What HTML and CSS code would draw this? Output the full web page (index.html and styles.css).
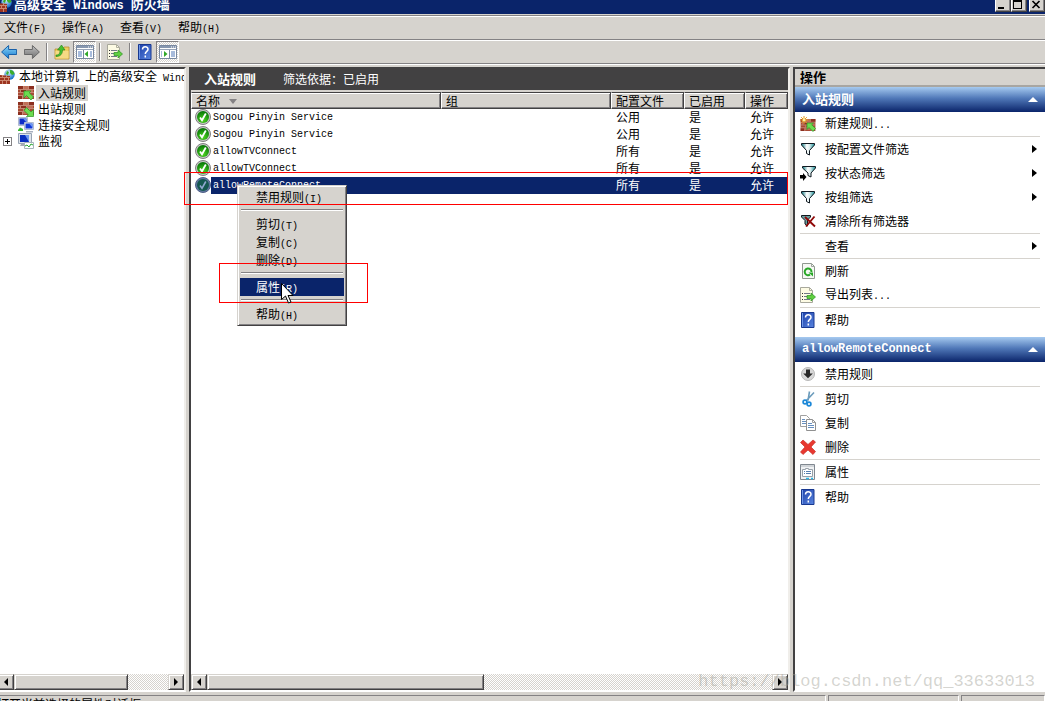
FILE: index.html
```html
<!DOCTYPE html>
<html lang="zh-CN">
<head>
<meta charset="utf-8">
<title>高级安全 Windows 防火墙</title>
<link rel="stylesheet" href="styles.css">
</head>
<body>
<svg class="sprite" aria-hidden="true">
  <defs>
    <linearGradient id="g-blue" x1="0" y1="0" x2="0" y2="1"><stop offset="0" stop-color="#8fd8f8"/><stop offset="1" stop-color="#1478d0"/></linearGradient>
    <linearGradient id="g-grey" x1="0" y1="0" x2="0" y2="1"><stop offset="0" stop-color="#c0c0c0"/><stop offset="1" stop-color="#707070"/></linearGradient>
    <linearGradient id="g-help" x1="0" y1="0" x2="1" y2="1"><stop offset="0" stop-color="#1c3fa8"/><stop offset="1" stop-color="#5a86e0"/></linearGradient>
    <linearGradient id="g-funnel" x1="0" y1="0" x2="1" y2="0"><stop offset="0" stop-color="#0a7880"/><stop offset=".4" stop-color="#ffffff"/><stop offset=".6" stop-color="#e0f0f0"/><stop offset="1" stop-color="#169098"/></linearGradient>
    <radialGradient id="g-ok" cx=".5" cy=".75" r=".7"><stop offset="0" stop-color="#4fd820"/><stop offset="1" stop-color="#087808"/></radialGradient>
    <radialGradient id="g-globe" cx=".4" cy=".3" r=".7"><stop offset="0" stop-color="#d8f4ff"/><stop offset="1" stop-color="#1470c8"/></radialGradient>
  </defs>
  <symbol id="bricks" viewBox="0 0 16 13">
    <rect width="16" height="13" fill="#a84a34"/>
    <path d="M0 0h5v3H0zM11 0h5v3h-5zM3 4h5v2H3zM0 10h4v3H0z" fill="#8c2f20"/>
    <path d="M6 0h4v3H6zM9 4h6v2H9zM5 10h6v2H5z" fill="#c07058"/>
    <path d="M0 3.500h16M0 6.500h16M0 9.500h16M5.500 0v3M10.500 0v3M2.500 4v2M8.500 4v2M5.500 7v2M11.500 7v2M4.500 10v3M11.500 10v3" stroke="#d0a490" fill="none" stroke-width=".7"/>
  </symbol>
  <symbol id="i-firewall" viewBox="0 0 16 16">
    <circle cx="10.500" cy="5.500" r="5.200" fill="url(#g-globe)"/>
    <path d="M11 1c3 0 4 2 4.500 4L13 6l-2-2zM8 2l2 1-1 3-2-1z" fill="#3cae2c"/>
    <path d="M0 6l11 1v8H0z" fill="#9c3420"/>
    <path d="M0 8.500h11M0 11.500h11M3.500 6v2M7.500 6v2M5.500 9v2M9.500 9v2M3.500 12v3M7.500 12v3" stroke="#d89c84" fill="none" stroke-width=".8"/>
  </symbol>
  <symbol id="i-in" viewBox="0 0 16 16">
    <use href="#bricks" y="1" width="16" height="13"/>
    <path d="M6 6h7l-1.800 1.800L15.500 12 13 15l-4.500-4.500L6 13z" fill="#6cdc50" stroke="#2c9424" stroke-width=".7"/>
  </symbol>
  <symbol id="i-out" viewBox="0 0 16 16">
    <use href="#bricks" y="1" width="16" height="13"/>
    <path d="M15.500 15.500h-7l1.800-1.800L6 9.500 8.500 6.500 13 11l2.500-2.500z" fill="#6cdc50" stroke="#2c9424" stroke-width=".7"/>
  </symbol>
  <symbol id="i-new" viewBox="0 0 16 16">
    <use href="#bricks" y="3" width="16" height="12"/>
    <path d="M7 7h6.500l-1.800 1.800 3.800 3.700-2.500 3-4-4L7 13.500z" fill="#6cdc50" stroke="#2c9424" stroke-width=".7"/>
    <path d="M4 0v8M0 4h8M1.200 1.200l5.600 5.600M6.800 1.200L1.200 6.800" stroke="#e89818"/>
    <circle cx="4" cy="4" r="1.600" fill="#fff2a0"/>
  </symbol>
  <symbol id="i-conn" viewBox="0 0 16 16">
    <path d="M.500.500h9v8h-9z" fill="#e0e4ec" stroke="#b0bcd0"/><path d="M1.500 1.500h7v6h-7z" fill="#0c2cc8"/><path d="M5 1.500h3.500v4z" fill="#6c98f0"/>
    <path d="M6.500 5.500h9v7h-9z" fill="#e8ecf4" stroke="#b0bcd0"/><path d="M7.500 6.500h7v5h-7z" fill="#1038d8"/><path d="M11 6.500h3.500v4z" fill="#6c98f0"/>
    <path d="M0 13l2-2.500L5 12v2H0z" fill="#38b830"/><path d="M8 14h7v1.500H8z" fill="#a8b0c0"/>
  </symbol>
  <symbol id="i-monitor" viewBox="0 0 16 16">
    <path d="M.500.500h13v10H.500z" fill="#dfe4ea" stroke="#98a4b4"/><path d="M2 2h9v7H2z" fill="#0a30c0"/><path d="M7 2h4v7z" fill="#6c98f0"/>
    <path d="M3 11h6v2H2z" fill="#a8acb4"/><path d="M6.500 9.500h9v6h-9z" fill="#fff" stroke="#a8b4bc"/>
    <path d="M7 13l2-1 2 2 2-3 2 1" stroke="#28a830" fill="none"/>
  </symbol>
  <symbol id="i-ok" viewBox="0 0 16 16">
    <circle cx="8" cy="8" r="7.500" fill="#c8c8c8" stroke="#808080"/><circle cx="8" cy="8" r="6" fill="url(#g-ok)"/>
    <path d="M5 8.500L7 11.300l3.800-6.800" stroke="#fff" stroke-width="1.800" fill="none"/>
  </symbol>
  <symbol id="i-oksel" viewBox="0 0 16 16">
    <circle cx="8" cy="8" r="7.500" fill="#6078a0" stroke="#506088"/><circle cx="8" cy="8" r="6" fill="#145850"/>
    <path d="M5 8.500L7 11.300l3.800-6.800" stroke="#90a8d0" stroke-width="1.600" fill="none"/>
  </symbol>
  <symbol id="i-back" viewBox="0 0 16 16"><path d="M.600 8l7-6.500V5.500h8v5h-8v4z" fill="url(#g-blue)" stroke="#1860a8"/></symbol>
  <symbol id="i-fwd" viewBox="0 0 16 16"><path d="M15.400 8l-7-6.500V5.500h-8v5h8v4z" fill="url(#g-grey)" stroke="#686868"/></symbol>
  <symbol id="i-up" viewBox="0 0 16 16">
    <path d="M1 5h8l1-2h5v12H1z" fill="#f0cc60" stroke="#b89030" stroke-width=".8"/><path d="M1.500 7h13v7.500h-13z" fill="#f6da84"/>
    <path d="M2 11c3.500 0 4-2 4-5H3.500L7.500 1l3.500 5H8.500c0 4-2 6.500-6.500 6.500z" fill="#48c030" stroke="#208018" stroke-width=".6"/>
  </symbol>
  <symbol id="i-tree" viewBox="0 0 18 16">
    <path d="M.500 1.500h17v13H.500z" fill="#fff" stroke="#7888a0"/><path d="M1 2h16v2H1z" fill="#8898b0"/><path d="M1 5.500h16" stroke="#98a4b8"/>
    <path d="M12 3h1M14 3h1M16 3h1" stroke="#fff"/><path d="M7.500 6v8" stroke="#7888a0"/><path d="M2 8h4M2 10h4M2 12h4M14 8h2M14 10h2M14 12h2" stroke="#5078b8"/><path d="M12 7v6L8.500 10z" fill="#30a828"/>
  </symbol>
  <symbol id="i-pane" viewBox="0 0 18 16">
    <path d="M.500 1.500h17v13H.500z" fill="#fff" stroke="#7888a0"/><path d="M1 2h16v2H1z" fill="#8898b0"/><path d="M1 5.500h16" stroke="#98a4b8"/>
    <path d="M12 3h1M14 3h1M16 3h1" stroke="#fff"/><path d="M10.500 6v8" stroke="#7888a0"/><path d="M12 8h4M12 10h4M12 12h4M2 8h1M2 10h1M2 12h1" stroke="#5078b8"/><path d="M5 7v6l3.500-3z" fill="#30a828"/>
  </symbol>
  <symbol id="i-export" viewBox="0 0 16 16">
    <path d="M.500.500h9l3 3v12H.500z" fill="#fdfbe4" stroke="#a8a89c"/><path d="M9.500.500v3h3" fill="none" stroke="#b0b0a0"/>
    <path d="M2 6.500h1M2 9.500h1M2 12.500h1" stroke="#303030"/><path d="M4 6.500h6M4 9.500h4M4 12.500h6" stroke="#707888"/>
    <path d="M7 8.500h4V6l4.500 4L11 14v-2.500H7z" fill="#60d040" stroke="#289020" stroke-width=".7"/>
  </symbol>
  <symbol id="i-help" viewBox="0 0 14 16">
    <path d="M.500.500h12.500v15H.500z" fill="url(#g-help)" stroke="#183890"/><path d="M1.500 1v14" stroke="#7098e8"/>
    <path d="M4.500 5.500C4.500 2 10 2 10 5.200c0 2.300-2.700 2-2.700 4.800M7.300 11.500v2" stroke="#fff" stroke-width="1.500" fill="none"/>
  </symbol>
  <symbol id="i-funnel" viewBox="0 0 16 16"><path d="M1.500 2.500h13v1.500L9.500 9.500v4.500l-3-1.500v-3L1.500 4z" fill="url(#g-funnel)" stroke="#101820"/></symbol>
  <symbol id="i-funnelgo" viewBox="0 0 16 16"><path d="M2.500 1.500h13V3L11 8v4l-3-1.500V8L2.500 3z" fill="url(#g-funnel)" stroke="#101820"/><path d="M0 10h3V8l3.500 4L3 16v-2.500H0z" fill="#000"/></symbol>
  <symbol id="i-funnelx" viewBox="0 0 16 16"><path d="M1.500 2.500h9v1.500L7.500 7v6L5 11V7.500L1.500 4z" fill="#6aa0a0" stroke="#101820"/><path d="M5 4l10 9.500M14.500 3.500L6 13.500" stroke="#900808" stroke-width="1.900"/></symbol>
  <symbol id="i-refresh" viewBox="0 0 16 16">
    <path d="M2.500.500h9l3 3v12h-12z" fill="#f6f8f4" stroke="#909890"/><path d="M11.500.500v3h3" fill="none" stroke="#a0a8a0"/>
    <path d="M11.500 9a3.400 3.400 0 1 0-1.500 2.700" stroke="#28a828" stroke-width="2" fill="none"/><path d="M8.500 9.500l4.500 0v4z" fill="#28a828"/>
  </symbol>
  <symbol id="i-disable" viewBox="0 0 16 16"><circle cx="8" cy="8" r="6.500" fill="#d8d8d8" stroke="#b8b8b8"/><path d="M6 3.500h4V7.500h2.800L8 12.300 3.200 7.500H6z" fill="#282828"/></symbol>
  <symbol id="i-cut" viewBox="0 0 16 16"><path d="M9.500.500L8 9.500M14 1.500L6 10" stroke="#6c9cbc" stroke-width="1.600"/><circle cx="5" cy="11" r="1.900" fill="none" stroke="#1c88d8" stroke-width="1.700"/><circle cx="9" cy="13" r="1.900" fill="none" stroke="#1c88d8" stroke-width="1.700"/></symbol>
  <symbol id="i-copy" viewBox="0 0 16 16">
    <path d="M.500.500h6l3 3v8h-9z" fill="#fff" stroke="#a0a0a0"/><path d="M2 4.500h3M2 6.500h4M2 8.500h4" stroke="#6890c0"/>
    <path d="M6.500 4.500h6l3 3v8h-9z" fill="#fff" stroke="#909090"/><path d="M12.500 4.500v3h3" stroke="#a0a0a0" fill="none"/><path d="M8 8.500h4M8 10.500h6M8 12.500h6" stroke="#6890c0"/>
  </symbol>
  <symbol id="i-delete" viewBox="0 0 16 16"><path d="M3 1l5 4.500L13 1l2.500 2-4.500 5 4.500 4.500L13 15.500 8 11l-5 4.500L.500 13 5 8 .500 3.500z" fill="#e83830" stroke="#c83028" stroke-width=".7"/></symbol>
  <symbol id="i-props" viewBox="0 0 16 16">
    <path d="M.500.500h14v15H.500z" fill="#f0f2f4" stroke="#808890"/><path d="M1 1h13v2H1z" fill="#d0d4d8"/>
    <path d="M2.500 5.500h3v-1h3v1h4v7h-10z" fill="#fff" stroke="#98a0a8"/><path d="M4 7.500h1M4 9.500h1M6 7.500h5M6 9.500h5" stroke="#5880b0"/><path d="M6 14.500h3M11 14.500h2" stroke="#28b8e8" stroke-width="1.500"/>
  </symbol>
</svg>

<div class="window">
  <header class="titlebar">
    <svg class="icon"><use href="#i-firewall"/></svg>
    <h1 class="title">高级安全<span class="en"> Windows </span>防火墙</h1>
    <div class="controls">
      <button class="control" aria-label="最小化"><svg viewBox="0 0 12 12"><path d="M2 8h6v2H2z"/></svg></button>
      <button class="control" aria-label="最大化"><svg viewBox="0 0 12 12"><path d="M1 1h9v9H1zM2 3v6h7V3z" fill-rule="evenodd"/></svg></button>
      <button class="control control-close" aria-label="关闭"><svg viewBox="0 0 12 12"><path d="M2.500 2l7 7M9.500 2l-7 7" stroke="#000" stroke-width="1.700"/></svg></button>
    </div>
  </header>

  <nav class="menubar">
    <button>文件<span class="en">(F)</span></button>
    <button>操作<span class="en">(A)</span></button>
    <button>查看<span class="en">(V)</span></button>
    <button>帮助<span class="en">(H)</span></button>
  </nav>

  <div class="toolbar">
    <button class="tool" aria-label="后退"><svg class="icon"><use href="#i-back"/></svg></button>
    <button class="tool" aria-label="前进"><svg class="icon"><use href="#i-fwd"/></svg></button>
    <span class="divider"></span>
    <button class="tool" aria-label="上一级"><svg class="icon"><use href="#i-up"/></svg></button>
    <button class="tool pressed" aria-label="显示控制台树"><svg class="icon wide"><use href="#i-tree"/></svg></button>
    <span class="divider"></span>
    <button class="tool" aria-label="导出列表"><svg class="icon"><use href="#i-export"/></svg></button>
    <span class="divider"></span>
    <button class="tool" aria-label="帮助"><svg class="icon"><use href="#i-help"/></svg></button>
    <button class="tool pressed" aria-label="显示操作窗格"><svg class="icon wide"><use href="#i-pane"/></svg></button>
  </div>

  <main class="panes">
    <section class="pane tree-pane">
      <ul class="tree">
        <li class="root"><svg class="icon"><use href="#i-firewall"/></svg><span class="label">本地计算机<span class="en"> </span>上的高级安全<span class="en"> Windows </span>防火墙</span></li>
        <li><svg class="icon"><use href="#i-in"/></svg><span class="label current">入站规则</span></li>
        <li><svg class="icon"><use href="#i-out"/></svg><span class="label">出站规则</span></li>
        <li><svg class="icon"><use href="#i-conn"/></svg><span class="label">连接安全规则</span></li>
        <li class="expandable"><button class="expander" aria-label="展开"></button><svg class="icon"><use href="#i-monitor"/></svg><span class="label">监视</span></li>
      </ul>
      <div class="scrollbar">
        <button class="arrow" aria-label="向左滚动"><svg viewBox="0 0 8 8"><path d="M6 0v8L2 4z"/></svg></button>
        <div class="track"><div class="thumb" style="width:74%"></div></div>
        <button class="arrow" aria-label="向右滚动"><svg viewBox="0 0 8 8"><path d="M2 0v8l4-4z"/></svg></button>
      </div>
    </section>

    <section class="pane list-pane">
      <div class="banner"><h2>入站规则</h2><span>筛选依据：已启用</span></div>
      <div class="list">
        <table class="rules">
          <colgroup><col class="c-name"><col class="c-group"><col class="c-profile"><col class="c-enabled"><col></colgroup>
          <thead><tr><th>名称<svg class="sort" viewBox="0 0 8 5"><path d="M0 0h8L4 5z"/></svg></th><th>组</th><th>配置文件</th><th>已启用</th><th>操作</th></tr></thead>
          <tbody>
            <tr><td><div class="name"><svg class="icon"><use href="#i-ok"/></svg><span class="en">Sogou Pinyin Service</span></div></td><td></td><td>公用</td><td>是</td><td>允许</td></tr>
            <tr><td><div class="name"><svg class="icon"><use href="#i-ok"/></svg><span class="en">Sogou Pinyin Service</span></div></td><td></td><td>公用</td><td>是</td><td>允许</td></tr>
            <tr><td><div class="name"><svg class="icon"><use href="#i-ok"/></svg><span class="en">allowTVConnect</span></div></td><td></td><td>所有</td><td>是</td><td>允许</td></tr>
            <tr><td><div class="name"><svg class="icon"><use href="#i-ok"/></svg><span class="en">allowTVConnect</span></div></td><td></td><td>所有</td><td>是</td><td>允许</td></tr>
            <tr class="selected"><td><div class="name"><svg class="icon"><use href="#i-oksel"/></svg><span class="en">allowRemoteConnect</span></div></td><td></td><td>所有</td><td>是</td><td>允许</td></tr>
          </tbody>
        </table>
      </div>
      <div class="scrollbar">
        <button class="arrow" aria-label="向左滚动"><svg viewBox="0 0 8 8"><path d="M6 0v8L2 4z"/></svg></button>
        <div class="track"><div class="thumb" style="width:49%"></div></div>
        <button class="arrow" aria-label="向右滚动"><svg viewBox="0 0 8 8"><path d="M2 0v8l4-4z"/></svg></button>
      </div>
    </section>

    <aside class="pane actions-pane">
      <h2 class="actions-title">操作</h2>
      <section class="group">
        <h3>入站规则<svg class="collapse" viewBox="0 0 10 5"><path d="M0 5h10L5 0z"/></svg></h3>
        <ul>
          <li class="ruled"><button><svg class="icon"><use href="#i-new"/></svg><span>新建规则<span class="en">...</span></span></button></li>
          <li><button class="more"><svg class="icon"><use href="#i-funnel"/></svg><span>按配置文件筛选</span></button></li>
          <li><button class="more"><svg class="icon"><use href="#i-funnelgo"/></svg><span>按状态筛选</span></button></li>
          <li><button class="more"><svg class="icon"><use href="#i-funnel"/></svg><span>按组筛选</span></button></li>
          <li class="ruled"><button><svg class="icon"><use href="#i-funnelx"/></svg><span>清除所有筛选器</span></button></li>
          <li class="ruled"><button class="more"><svg class="icon"></svg><span>查看</span></button></li>
          <li><button><svg class="icon"><use href="#i-refresh"/></svg><span>刷新</span></button></li>
          <li class="ruled"><button><svg class="icon"><use href="#i-export"/></svg><span>导出列表<span class="en">...</span></span></button></li>
          <li><button><svg class="icon"><use href="#i-help"/></svg><span>帮助</span></button></li>
        </ul>
      </section>
      <section class="group">
        <h3><span class="en">allowRemoteConnect</span><svg class="collapse" viewBox="0 0 10 5"><path d="M0 5h10L5 0z"/></svg></h3>
        <ul>
          <li class="ruled"><button><svg class="icon"><use href="#i-disable"/></svg><span>禁用规则</span></button></li>
          <li><button><svg class="icon"><use href="#i-cut"/></svg><span>剪切</span></button></li>
          <li><button><svg class="icon"><use href="#i-copy"/></svg><span>复制</span></button></li>
          <li class="ruled"><button><svg class="icon"><use href="#i-delete"/></svg><span>删除</span></button></li>
          <li class="ruled"><button><svg class="icon"><use href="#i-props"/></svg><span>属性</span></button></li>
          <li><button><svg class="icon"><use href="#i-help"/></svg><span>帮助</span></button></li>
        </ul>
      </section>
    </aside>
  </main>

  <footer class="statusbar">
    <span class="status-text">打开当前选择的属性对话框</span><span class="status-box"></span><span class="status-box last"></span>
  </footer>

  <div class="context-menu" role="menu">
    <button role="menuitem">禁用规则<span class="en">(I)</span></button>
    <hr>
    <button role="menuitem">剪切<span class="en">(T)</span></button>
    <button role="menuitem">复制<span class="en">(C)</span></button>
    <button role="menuitem">删除<span class="en">(D)</span></button>
    <hr>
    <button role="menuitem" class="active">属性<span class="en">(R)</span></button>
    <hr>
    <button role="menuitem">帮助<span class="en">(H)</span></button>
  </div>

  <div class="mark mark-row"></div>
  <div class="mark mark-item"></div>
  <svg class="cursor" viewBox="0 0 13 21"><path d="M.500.500v16l4-3.500 3 7 2.500-1-3-6.500h5z" fill="#fff" stroke="#000"/></svg>
  <div class="watermark">https://blog.csdn.net/qq_33633013</div>
</div>
</body>
</html>
```

FILE: styles.css
```css
:root {
  --face: #d6d3ce;
  --navy: #0a246a;
  --shade: #848284;
  --dark: #424142;
}

* { box-sizing: border-box; }

body {
  margin: 0;
  overflow: hidden;
  background: var(--face);
  color: #000;
  font: 12px/16px "Noto Sans CJK SC", sans-serif;
}

h1, h2, h3, ul { margin: 0; padding: 0; font-size: 13px; list-style: none; }

button {
  margin: 0;
  padding: 0;
  border: 0;
  background: none;
  color: inherit;
  font: inherit;
}

.sprite { position: absolute; width: 0; height: 0; }
.icon { flex: none; display: block; width: 16px; height: 16px; }
.icon.wide { width: 18px; }

.en {
  font-family: "Liberation Mono", monospace;
  font-size: 10px;
  white-space: pre;
}
h1 .en, h3 .en { font-size: 12px; }

/* The frame's border lies past the top and left edges of the screen. */
.window {
  position: relative;
  display: grid;
  grid-template-rows: 18px 25px 24px minmax(0, 1fr) 22px;
  height: calc(100vh + 17px);
  margin: -4px 0 0 -4px;
  background: var(--face);
}

.titlebar {
  display: flex;
  align-items: center;
  gap: 2px;
  background: var(--navy);
  color: #fff;
}
.title { line-height: 18px; }
.controls { display: flex; margin-left: auto; }
.control {
  width: 16px;
  height: 14px;
  border: 1px solid;
  border-color: #fff var(--dark) var(--dark) #fff;
  box-shadow: inset -1px -1px var(--shade);
  background: var(--face);
}
.control svg { display: block; width: 12px; height: 12px; }
.control-close { margin-left: 2px; }

.menubar {
  display: flex;
  align-items: center;
  margin-top: 1px;
  padding-top: 2px;
  border-top: 1px solid var(--shade);
  box-shadow: inset 0 1px #fff;
}
.menubar button { padding: 0 8px; }

.toolbar {
  display: flex;
  align-items: center;
  padding: 1px 0 0 1px;
  border-top: 1px solid var(--shade);
  box-shadow: inset 0 1px #fff;
}
.tool {
  display: grid;
  place-items: center;
  width: 23px;
  height: 22px;
}
.pressed {
  border: 1px solid;
  border-color: var(--shade) #fff #fff var(--shade);
  background: repeating-conic-gradient(#fff 0 25%, var(--face) 0 50%) 0 0 / 2px 2px;
}
.divider {
  width: 2px;
  height: 18px;
  margin: 0 2px 0 3px;
  border-left: 1px solid var(--shade);
  border-right: 1px solid #fff;
}

.panes {
  display: grid;
  grid-template-columns: 190px minmax(0, 1fr) 252px;
  gap: 3px;
  padding: 3px 0 0;
  border-top: 1px solid var(--shade);
  box-shadow: inset 0 1px #fff;
}
.pane {
  display: flex;
  flex-direction: column;
  min-width: 0;
  min-height: 0;
  border: 2px solid;
  border-color: var(--dark) #f0eeea #fff var(--dark);
  background: #fff;
}

.tree { flex: 1; overflow: hidden; }
.tree li {
  display: flex;
  align-items: center;
  gap: 2px;
  height: 16px;
  padding-left: 20px;
  font-size: 12px;
  white-space: nowrap;
}
.tree .root { padding-left: 1px; }
.tree .expandable { padding-left: 5px; gap: 6px; }
.tree .expandable .label { margin-left: -4px; }
.label { padding: 0 2px; }
.current { background: var(--face); }
.expander {
  width: 9px;
  height: 9px;
  border: 1px solid var(--shade);
  background:
    linear-gradient(#000, #000) center / 5px 1px no-repeat,
    linear-gradient(#000, #000) center / 1px 5px no-repeat;
}

.scrollbar { display: flex; height: 16px; }
.arrow, .thumb {
  border: 1px solid;
  border-color: var(--face) var(--dark) var(--dark) var(--face);
  box-shadow: inset 1px 1px #fff, inset -1px -1px var(--shade);
  background: var(--face);
}
.arrow { display: grid; place-items: center; flex: none; width: 16px; }
.arrow svg { width: 8px; height: 8px; }
.track {
  flex: 1;
  background: repeating-conic-gradient(#fff 0 25%, var(--face) 0 50%) 0 0 / 2px 2px;
}
.thumb { height: 16px; }

.banner {
  display: flex;
  align-items: center;
  gap: 27px;
  height: 21px;
  padding: 0 0 2px 13px;
  background: var(--dark);
  color: #fff;
}
.list {
  flex: 1;
  border-top: 2px solid var(--face);
  box-shadow: inset 0 1px var(--dark);
  overflow: hidden;
}
.rules { width: 100%; table-layout: fixed; border-collapse: separate; border-spacing: 0; }
.c-name { width: 250px; }
.c-group { width: 170px; }
.c-profile { width: 73px; }
.c-enabled { width: 61px; }
.rules th {
  height: 17px;
  padding: 0 0 0 4px;
  border: 1px solid;
  border-color: var(--dark) var(--dark) var(--dark) #fff;
  box-shadow: inset 0 1px #fff, inset -1px -1px var(--shade);
  background: var(--face);
  font-weight: 400;
  line-height: 15px;
  text-align: left;
}
.sort { width: 8px; height: 5px; margin-left: 9px; vertical-align: 2px; fill: var(--shade); }
.rules td { height: 17px; padding: 0 0 2px 5px; line-height: 15px; }
.rules td:first-child { padding: 0 0 0 4px; line-height: 17px; }
.name { display: flex; align-items: flex-start; }
.name .en { flex: 1; padding-left: 2px; }
.selected { color: #fff; }
.selected td + td, .selected .en { background: var(--navy); }

.actions-pane { border-right: 0; }
.actions-title {
  height: 18px;
  padding-left: 5px;
  border-bottom: 2px solid #a8a6a2;
  background: var(--face);
  line-height: 15px;
}
.group { padding-bottom: 5px; }
.group h3 {
  display: flex;
  align-items: center;
  justify-content: space-between;
  height: 25px;
  padding: 0 7px 1px;
  background: linear-gradient(#a6caf0, #5078b8 45%, var(--navy));
  color: #fff;
}
.collapse { width: 10px; height: 5px; fill: #fff; }
.group ul { padding: 0 5px; font-size: 12px; }
.ruled { border-bottom: 1px solid var(--face); }
.group button {
  display: flex;
  align-items: center;
  gap: 9px;
  width: 100%;
  height: 24px;
  text-align: left;
}
.more::after {
  content: "";
  margin: 0 3px 0 auto;
  border: 4px solid transparent;
  border-left: 5px solid #000;
  border-right: 0;
}

.statusbar { display: flex; gap: 2px; padding-top: 3px; }
.status-text, .status-box {
  height: 18px;
  border: 1px solid;
  border-color: var(--shade) #fff #fff var(--shade);
  line-height: 16px;
}
.status-text { flex: 1; }
.status-box { width: 131px; }
.status-box.last { width: 84px; }

.context-menu {
  position: absolute;
  top: 189px;
  left: 241px;
  width: 110px;
  padding: 2px;
  border: 1px solid;
  border-color: var(--face) var(--dark) var(--dark) var(--face);
  box-shadow: inset 1px 1px #fff, inset -1px -1px var(--shade);
  background: var(--face);
}
.context-menu button {
  display: block;
  width: 100%;
  height: 18px;
  padding-left: 16px;
  line-height: 18px;
  text-align: left;
}
.context-menu hr {
  height: 2px;
  margin: 3px 1px 4px;
  border: 0;
  border-top: 1px solid var(--shade);
  border-bottom: 1px solid #fff;
}
.context-menu .active { background: var(--navy); color: #fff; }

.mark { position: absolute; border: 1px solid #f00; pointer-events: none; }
.mark-row { top: 176px; left: 188px; right: 257px; height: 33px; }
.mark-item { top: 267px; left: 223px; width: 149px; height: 40px; }
.cursor { position: absolute; top: 287px; left: 285px; width: 13px; height: 21px; }

.watermark {
  position: absolute;
  right: 10px;
  bottom: 20px;
  color: rgba(160, 160, 150, .45);
  font: 17px/24px "Liberation Mono", monospace;
  pointer-events: none;
}
```
